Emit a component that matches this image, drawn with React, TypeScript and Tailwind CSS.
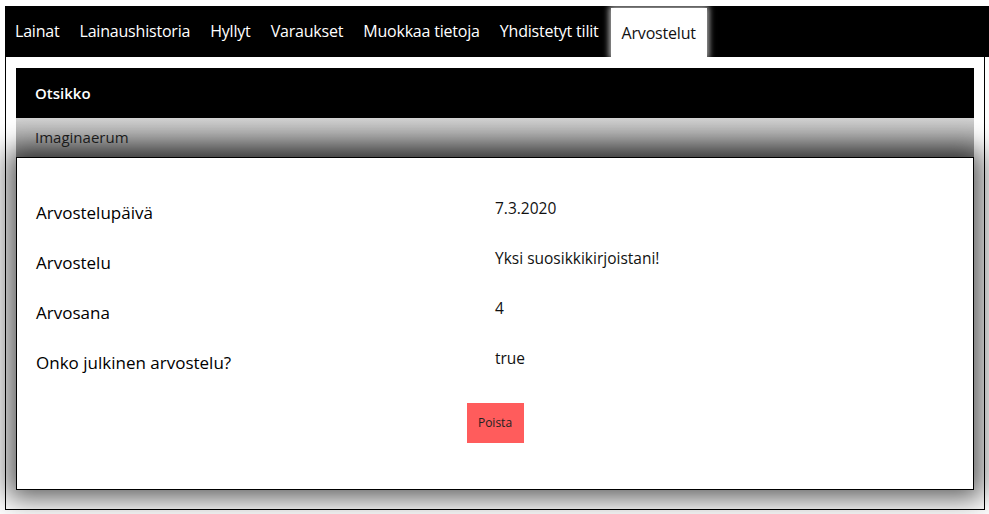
import React from "react";

const tabs = ["Lainat", "Lainaushistoria", "Hyllyt", "Varaukset", "Muokkaa tietoja", "Yhdistetyt tilit"];

const rows: [string, string][] = [
  ["Arvostelupäivä", "7.3.2020"],
  ["Arvostelu", "Yksi suosikkikirjoistani!"],
  ["Arvosana", "4"],
  ["Onko julkinen arvostelu?", "true"],
];

export default function App() {
  return (
    <div className="w-[989px] h-[514px] bg-white overflow-hidden font-['Open_Sans',sans-serif]">
      <div className="pt-[6px] pl-[5px]">
        <nav className="h-[51px] w-[984px] bg-black flex items-stretch">
          {tabs.map((t) => (
            <div key={t} className="px-[10px] flex items-center text-white text-[16px] tracking-[-0.2px] pb-[2px]">
              {t}
            </div>
          ))}
          <div className="mt-[2px] ml-[2px] px-[11px] flex items-center bg-white text-[#111] text-[16px] tracking-[-0.2px] shadow-[0_0_6px_2px_rgba(255,255,255,0.7)]">
            Arvostelut
          </div>
        </nav>
        <div className="w-[980px] h-[453px] border border-t-0 border-black px-[10px] pt-[11px]">
          <div className="h-[50px] bg-black flex items-center px-[19px] text-white text-[15px] font-semibold">
            Otsikko
          </div>
          <div className="h-[39px] bg-gradient-to-b from-[#d2d2d2] to-[#8c8c8c] flex items-center px-[19px] text-[#1a1a1a] text-[15px]">
            Imaginaerum
          </div>
          <div className="h-[333px] border border-black bg-white shadow-[0_0_26px_8px_rgba(0,0,0,0.65)] px-[19px] pt-[39px] flex flex-col">
            {rows.map(([l, v]) => (
              <div key={l} className="grid grid-cols-2 h-[50px]">
                <div className="pt-[4px] text-[17px] leading-[24px] text-black">{l}</div>
                <div className="text-[15.5px] leading-[22px] text-[#111]">{v}</div>
              </div>
            ))}
            <div className="flex justify-center mt-[6px]">
              <button className="w-[57px] h-[40px] bg-[#ff5c5c] text-[#222] text-[12px]">Poista</button>
            </div>
          </div>
        </div>
      </div>
    </div>
  );
}
